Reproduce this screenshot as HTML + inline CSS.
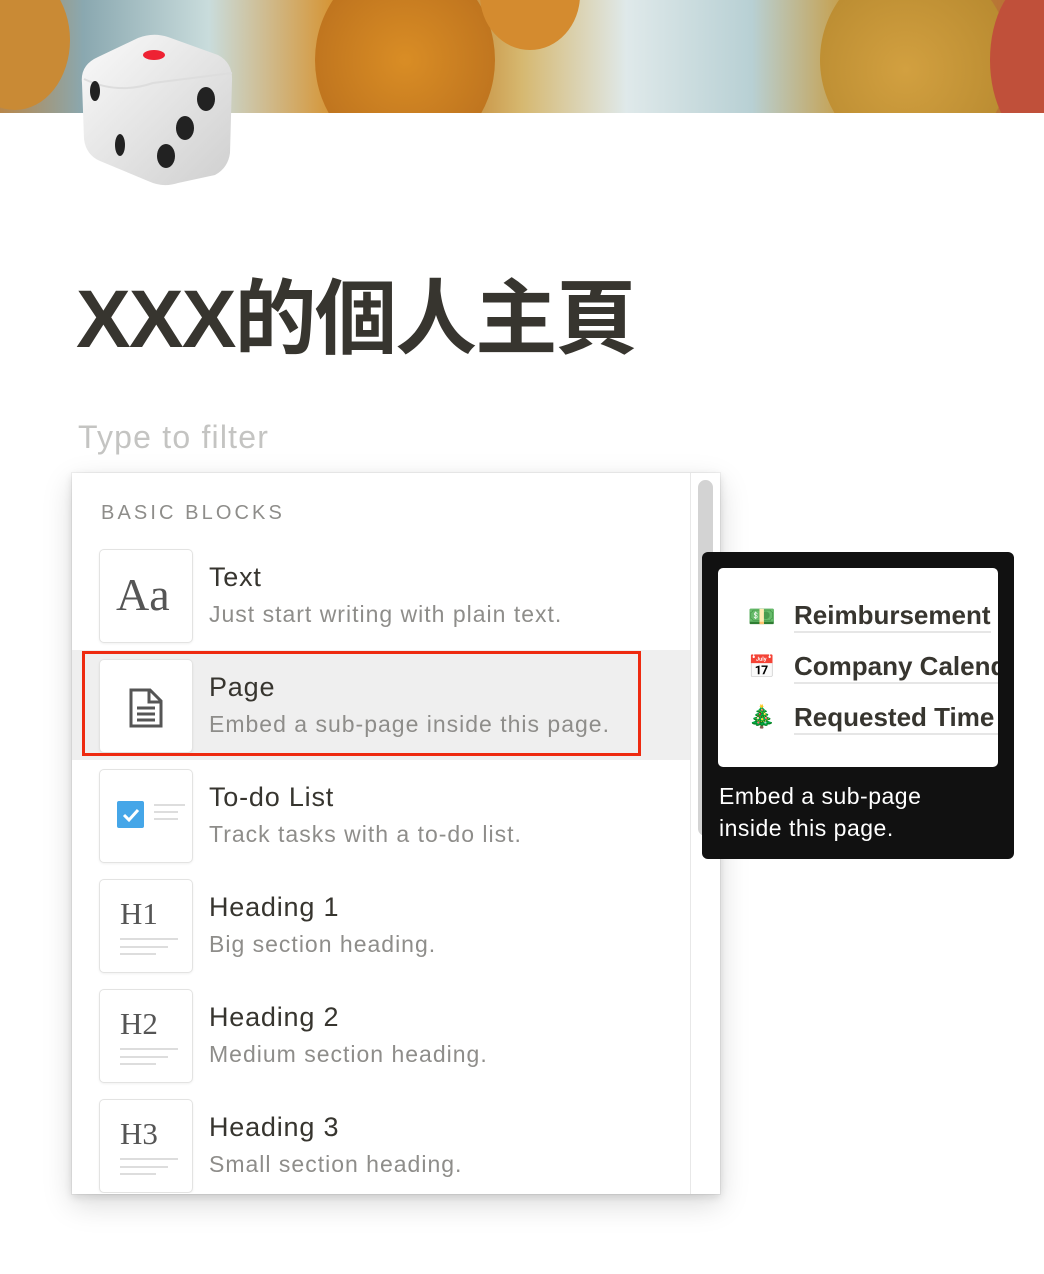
<!DOCTYPE html>
<html><head><meta charset="utf-8"><style>
*{margin:0;padding:0;box-sizing:border-box}
body{width:1044px;height:1274px;background:#fff;position:relative;overflow:hidden;font-family:"Liberation Sans","Noto Sans CJK TC",sans-serif;color:#37352f}
.cover{position:absolute;left:0;top:0;width:1044px;height:113px;overflow:hidden;background:linear-gradient(90deg,#b8874a 0%,#8aa8b0 8%,#c9dcdc 20%,#d69433 32%,#c07a25 42%,#d6b870 50%,#dfe9ea 60%,#b8d0d4 72%,#c89838 82%,#b08a30 92%,#c35a3c 100%)}
.blob{position:absolute;border-radius:50%}
.abs{position:absolute}
.row{position:absolute;left:72px;width:618px;height:110px}
.ib{position:absolute;left:27px;top:9px;width:94px;height:94px;border:1px solid #e3e3e2;border-radius:5px;background:#fff;box-shadow:0 1px 2px rgba(0,0,0,.06)}
.t{position:absolute;left:137px;top:22px;font-size:27px;color:#37352f;letter-spacing:.8px}
.d{position:absolute;left:137px;top:61px;font-size:23px;color:#8e8d8a;letter-spacing:1px}
.hl{position:absolute;left:20px;width:58px;height:2px;background:#ddd}
.hh{position:absolute;left:20px;top:16px;font-family:"Liberation Serif",serif;font-size:31px;color:#555}
.tl{font-size:26px;font-weight:bold;color:#37352f;position:absolute;left:76px;border-bottom:2px solid #e6e6e6;white-space:nowrap;line-height:32px}
</style></head><body>
<div class="cover">
<div class="blob" style="left:-40px;top:-30px;width:110px;height:140px;background:#c98a35"></div>
<div class="blob" style="left:315px;top:-40px;width:180px;height:200px;background:radial-gradient(circle at 50% 50%,#d98d25,#b46a1c)"></div>
<div class="blob" style="left:480px;top:-60px;width:100px;height:110px;background:#d48b2f"></div>
<div class="blob" style="left:820px;top:-40px;width:190px;height:200px;background:radial-gradient(circle at 45% 55%,#d2a040,#b0832b)"></div>
<div class="blob" style="left:990px;top:-20px;width:90px;height:160px;background:#c0503a"></div>
</div>
<svg class="abs" style="left:78px;top:33px" width="158" height="155" viewBox="0 0 158 155">
<defs><linearGradient id="g" x1="0" y1="0" x2="1" y2="1"><stop offset="0" stop-color="#fafafa"/><stop offset="1" stop-color="#cfcfcf"/></linearGradient></defs>
<path d="M4 50 Q2 32 20 24 L60 5 Q75 -1 90 4 L140 22 Q155 30 154 48 L152 120 Q150 135 137 142 L100 150 Q85 155 70 148 L22 128 Q8 122 6 106 Z" fill="url(#g)"/>
<path d="M6 46 Q40 62 75 50 L154 40" fill="none" stroke="#ddd" stroke-width="2"/>
<ellipse cx="76" cy="22" rx="11" ry="5" fill="#e23"/>
<ellipse cx="17" cy="58" rx="5" ry="10" fill="#222"/>
<ellipse cx="42" cy="112" rx="5" ry="11" fill="#222"/>
<ellipse cx="128" cy="66" rx="9" ry="12" fill="#222"/>
<ellipse cx="107" cy="95" rx="9" ry="12" fill="#222"/>
<ellipse cx="88" cy="123" rx="9" ry="12" fill="#222"/>
</svg>
<div class="abs" style="left:76px;top:272px;font-size:82px;font-weight:bold;letter-spacing:-1.8px;line-height:96px">XXX的個人主頁</div>
<div class="abs" style="left:78px;top:419px;font-size:32px;color:#c4c4c2;letter-spacing:1.2px">Type to filter</div>

<div class="abs" style="left:72px;top:473px;width:648px;height:721px;background:#fff;box-shadow:0 0 0 1px rgba(15,15,15,.05),0 3px 8px rgba(15,15,15,.12),0 10px 28px rgba(15,15,15,.15);overflow:hidden">
<div class="abs" style="left:618px;top:0;width:1px;height:721px;background:#e8e8e8"></div>
<div class="abs" style="left:626px;top:7px;width:15px;height:356px;border-radius:8px;background:#d3d3d3"></div>
<div class="abs" style="left:29px;top:29px;font-size:20px;letter-spacing:3.1px;color:#8e8d8a">BASIC BLOCKS</div>
</div>

<div class="row" style="top:540px"><div class="ib"><div class="abs" style="left:16px;top:18px;font-family:'Liberation Serif',serif;font-size:46px;color:#555">Aa</div></div><div class="t">Text</div><div class="d">Just start writing with plain text.</div></div>
<div class="row" style="top:650px;background:#efefef"><div class="ib"><svg class="abs" style="left:29px;top:28px" width="34" height="40" viewBox="0 0 34 40"><path d="M2 2 H21 L32 13 V38 H2 Z" fill="none" stroke="#555" stroke-width="3"/><path d="M20 2 V14 H32" fill="none" stroke="#555" stroke-width="3"/><path d="M8 20H26M8 26H26M8 32H26" stroke="#555" stroke-width="3"/></svg></div><div class="t">Page</div><div class="d">Embed a sub-page inside this page.</div></div>
<div class="abs" style="left:82px;top:651px;width:559px;height:105px;border:3px solid #ee2a10"></div>
<div class="row" style="top:760px"><div class="ib"><div class="abs" style="left:17px;top:31px;width:27px;height:27px;background:#45a6e8;border-radius:2px"><svg width="27" height="27"><path d="M7 14 L12 19 L21 9" fill="none" stroke="#fff" stroke-width="3"/></svg></div><div class="abs" style="left:54px;top:34px;width:31px;height:2px;background:#ddd"></div><div class="abs" style="left:54px;top:41px;width:24px;height:2px;background:#ddd"></div><div class="abs" style="left:54px;top:48px;width:24px;height:2px;background:#ddd"></div></div><div class="t">To-do List</div><div class="d">Track tasks with a to-do list.</div></div>
<div class="row" style="top:870px"><div class="ib"><div class="hh">H1</div><div class="hl" style="top:58px"></div><div class="hl" style="top:66px;width:48px"></div><div class="hl" style="top:73px;width:36px"></div></div><div class="t">Heading 1</div><div class="d">Big section heading.</div></div>
<div class="row" style="top:980px"><div class="ib"><div class="hh">H2</div><div class="hl" style="top:58px"></div><div class="hl" style="top:66px;width:48px"></div><div class="hl" style="top:73px;width:36px"></div></div><div class="t">Heading 2</div><div class="d">Medium section heading.</div></div>
<div class="row" style="top:1090px;height:103px;overflow:hidden"><div class="ib"><div class="hh">H3</div><div class="hl" style="top:58px"></div><div class="hl" style="top:66px;width:48px"></div><div class="hl" style="top:73px;width:36px"></div></div><div class="t">Heading 3</div><div class="d">Small section heading.</div></div>

<div class="abs" style="left:702px;top:552px;width:312px;height:307px;background:#111;border-radius:6px">
<div class="abs" style="left:16px;top:16px;width:280px;height:199px;background:#fff;border-radius:5px;overflow:hidden">
<div class="abs" style="left:30px;top:36px;font-size:22px">💵</div><div class="tl" style="top:31px">Reimbursement</div>
<div class="abs" style="left:30px;top:86px;font-size:22px">📅</div><div class="tl" style="top:82px">Company Calendar</div>
<div class="abs" style="left:30px;top:136px;font-size:22px">🎄</div><div class="tl" style="top:133px">Requested Time Off</div>
</div>
<div class="abs" style="left:17px;top:228px;font-size:23px;color:#fff;line-height:32px;letter-spacing:.5px">Embed a sub-page<br>inside this page.</div>
</div>
</body></html>
